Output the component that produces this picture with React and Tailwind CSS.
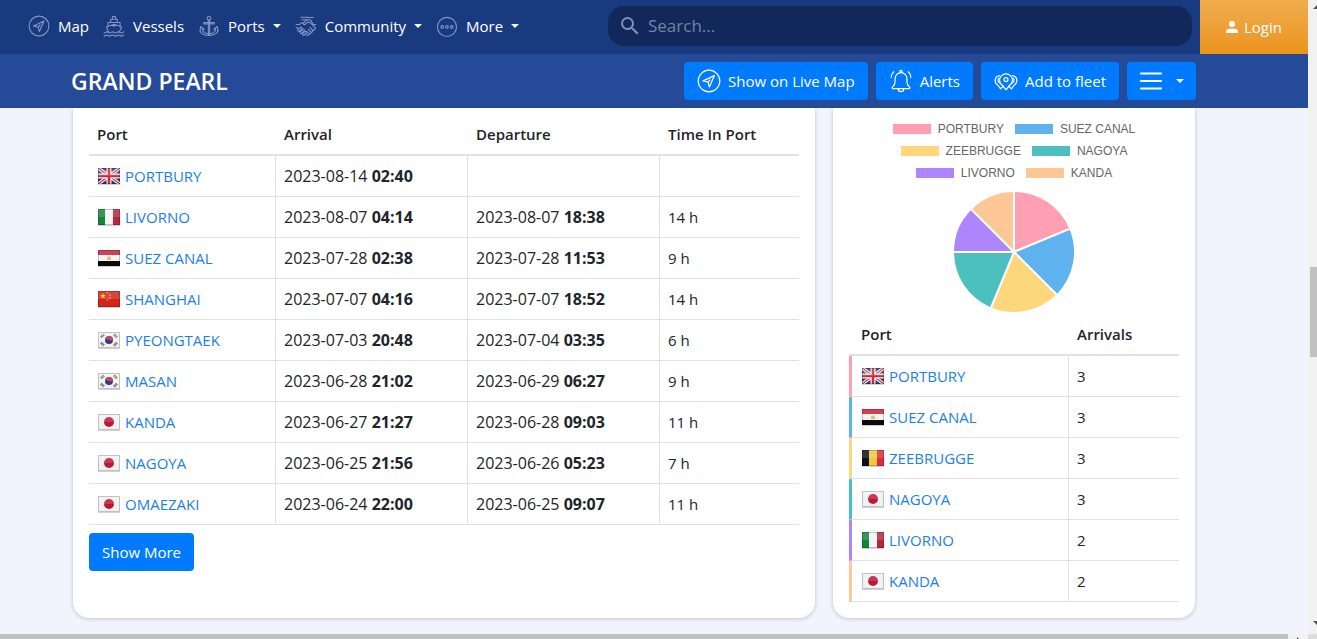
const NAV_ITEMS = [
    { label: 'Map', icon: CompassIcon },
    { label: 'Vessels', icon: ShipIcon },
    { label: 'Ports', icon: AnchorIcon, menu: true },
    { label: 'Community', icon: HandshakeIcon, menu: true },
    { label: 'More', icon: MoreIcon, menu: true },
];

const PORT_CALLS = [
    { port: 'PORTBURY', flag: 'gb', arrival: ['2023-08-14', '02:40'] },
    { port: 'LIVORNO', flag: 'it', arrival: ['2023-08-07', '04:14'], departure: ['2023-08-07', '18:38'], time: '14 h' },
    { port: 'SUEZ CANAL', flag: 'eg', arrival: ['2023-07-28', '02:38'], departure: ['2023-07-28', '11:53'], time: '9 h' },
    { port: 'SHANGHAI', flag: 'cn', arrival: ['2023-07-07', '04:16'], departure: ['2023-07-07', '18:52'], time: '14 h' },
    { port: 'PYEONGTAEK', flag: 'kr', arrival: ['2023-07-03', '20:48'], departure: ['2023-07-04', '03:35'], time: '6 h' },
    { port: 'MASAN', flag: 'kr', arrival: ['2023-06-28', '21:02'], departure: ['2023-06-29', '06:27'], time: '9 h' },
    { port: 'KANDA', flag: 'jp', arrival: ['2023-06-27', '21:27'], departure: ['2023-06-28', '09:03'], time: '11 h' },
    { port: 'NAGOYA', flag: 'jp', arrival: ['2023-06-25', '21:56'], departure: ['2023-06-26', '05:23'], time: '7 h' },
    { port: 'OMAEZAKI', flag: 'jp', arrival: ['2023-06-24', '22:00'], departure: ['2023-06-25', '09:07'], time: '11 h' },
];

const TOP_PORTS = [
    { port: 'PORTBURY', flag: 'gb', arrivals: 3, color: '#fe9fb3', swatch: 'bg-[#fe9fb3]', border: 'border-l-[#fe9fb3]' },
    { port: 'SUEZ CANAL', flag: 'eg', arrivals: 3, color: '#5eb2ed', swatch: 'bg-[#5eb2ed]', border: 'border-l-[#5eb2ed]' },
    { port: 'ZEEBRUGGE', flag: 'be', arrivals: 3, color: '#fed77d', swatch: 'bg-[#fed77d]', border: 'border-l-[#fed77d]' },
    { port: 'NAGOYA', flag: 'jp', arrivals: 3, color: '#4bc0be', swatch: 'bg-[#4bc0be]', border: 'border-l-[#4bc0be]' },
    { port: 'LIVORNO', flag: 'it', arrivals: 2, color: '#ad85fd', swatch: 'bg-[#ad85fd]', border: 'border-l-[#ad85fd]' },
    { port: 'KANDA', flag: 'jp', arrivals: 2, color: '#fdc896', swatch: 'bg-[#fdc896]', border: 'border-l-[#fdc896]' },
];

/* ICONS */
function Icon({ className = '', children }) {
    return (
        <svg viewBox="0 0 24 24" fill="none" stroke="currentColor" strokeWidth="1.2" strokeLinecap="round" strokeLinejoin="round" className={`shrink-0 ${className}`} aria-hidden="true">
            {children}
        </svg>
    );
}

function CompassIcon({ className }) {
    return (
        <Icon className={className}>
            <circle cx="12" cy="12" r="10.8" />
            <path d="M17.4 6.6 6 11.9l5 1.1 1.4 5z" />
            <path d="m11 13 2.2-2.1" />
        </Icon>
    );
}

function ShipIcon({ className }) {
    return (
        <Icon className={className}>
            <path d="M10.3 4.5V1.6h3.4v2.9M8.4 8V4.6h7.2V8M5.4 12.4V8.1h13.2v4.3" />
            <path d="M6.2 18.6 3.7 13 12 10.2l8.3 2.8-2.5 5.6M12 10.2v2.6" />
            <path d="M1.2 19.6c1.5 0 1.5-1.2 3-1.2s1.5 1.2 3.1 1.2 1.6-1.2 3.1-1.2 1.6 1.2 3.2 1.2 1.5-1.2 3.1-1.2 1.6 1.2 3.1 1.2 1.5-1.2 3-1.2" />
            <path d="M1.2 23c1.5 0 1.5-1.2 3-1.2S5.7 23 7.3 23s1.6-1.2 3.1-1.2S12 23 13.6 23s1.5-1.2 3.1-1.2S18.3 23 19.8 23s1.5-1.2 3-1.2" />
        </Icon>
    );
}

function AnchorIcon({ className }) {
    return (
        <Icon className={className}>
            <circle cx="12" cy="3.6" r="2" />
            <path d="M11.3 5.8v14.8l.7 1.7.7-1.7V5.8M6.3 8.3h11.4v1.5H6.3z" />
            <path d="M2.2 17.4 3 12.6l3.8 3-2.1.3c1 2.8 3.2 4.4 6.6 4.7M21.8 17.4l-.8-4.8-3.8 3 2.1.3c-1 2.8-3.2 4.4-6.6 4.7" />
            <path d="M2.2 17.4c1.5 3.3 5 4.9 9.8 4.9s8.3-1.6 9.8-4.9" />
        </Icon>
    );
}

function HandshakeIcon({ className }) {
    return (
        <Icon className={className}>
            <path d="M6.4 2.4h5.2c1.2 0 2 .4 3 .4H20M7.8 5.2h3.8M12.2 5.6 9.3 8.8c-.8 1.2.8 2.2 1.9 1.3l2.7-2.3 2.5.3 5.8 6" />
            <path d="M1.2 10.4h3.6l2-1.9 2.3.2M1.2 13.6l2.3 1M22.8 10.4h-3l-2.5-4.6-2.7-.8-2.4.6" />
            <path d="m3.4 15.9 2.2-2.3c1.2-1 2.6.3 1.7 1.5l-2.1 2.4c-1.2 1-2.7-.4-1.8-1.6zM5.8 18.3l2.4-2.6c1.2-1 2.6.3 1.7 1.5l-2.3 2.6c-1.2 1-2.7-.3-1.8-1.5zM8.4 20.4l2.1-2.3c1.2-1 2.5.3 1.7 1.5l-2.1 2.3c-1.1.9-2.5-.3-1.7-1.5z" />
            <path d="m12 20.9 1.5 1.2c1.4.7 2.5-.8 1.6-1.9l-2.3-2.3M15.3 20.4c1.7.7 2.8-.8 1.9-2l-2.6-2.6M17.4 18.6c1.7.4 2.6-1 1.7-2.1l-2.9-2.9M19.4 16.5c1.4.3 3-1.2 2.8-2.4" />
        </Icon>
    );
}

function MoreIcon({ className }) {
    return (
        <Icon className={className}>
            <circle cx="12" cy="13" r="10.4" />
            <circle cx="6.8" cy="13" r="1.4" />
            <circle cx="12" cy="13" r="1.4" />
            <circle cx="17.2" cy="13" r="1.4" />
        </Icon>
    );
}

function BellIcon({ className }) {
    return (
        <Icon className={className}>
            <path d="M10.9 3.6V2.4c0-1.5 2.2-1.5 2.2 0v1.2" />
            <path d="M4 19.7c-1 0-1.3-1.1-.5-1.7 1.7-1.3 2.6-3 2.6-5.6V9.5a5.9 5.9 0 0 1 11.8 0v2.9c0 2.6.9 4.3 2.6 5.6.8.6.5 1.7-.5 1.7z" />
            <path d="M9.3 19.9a2.7 2.7 0 0 0 5.4 0M4.7 2.8C3.2 4.2 2.3 6 2.2 8.3M19.3 2.8c1.5 1.4 2.4 3.2 2.5 5.5" />
        </Icon>
    );
}

function FleetIcon({ className }) {
    return (
        <Icon className={className}>
            <path d="M12 20.8c-1.1-1.6-2.2-2.8-3.5-4.2a6.4 6.4 0 1 1 7 0c-1.300 1.400-2.400 2.600-3.500 4.200z" />
            <circle cx="12" cy="10.600" r="2" />
            <path d="M5.600 6.600c-2.700.4-4.500 2.500-4.500 5 0 2.300 1.200 3.800 3 4.900l2.500 3.300 2.700-2.800M18.400 6.600c2.700.4 4.500 2.500 4.500 5 0 2.300-1.200 3.800-3 4.900l-2.500 3.300-2.700-2.800" />
            <path d="M4.900 9.200c-1.600 1.700-.9 4.300 1.300 5M19.100 9.200c1.600 1.700.9 4.300-1.300 5" />
        </Icon>
    );
}

function BarsIcon({ className }) {
    return (
        <Icon className={className}>
            <path strokeWidth="1.8" d="M1.8 4.500h20.400M1.800 12h20.400M1.800 19.500h20.400" />
        </Icon>
    );
}

function Caret() {
    return <span className="border-x-[4px] border-t-[4px] border-x-transparent border-t-current" />;
}

/* FLAGS */
function star(cx, cy, r) {
    return Array.from({ length: 10 }, (_, i) => {
        const a = (i * Math.PI) / 5 - Math.PI / 2;
        const d = i % 2 ? r * 0.4 : r;
        return `${cx + d * Math.cos(a)},${cy + d * Math.sin(a)}`;
    }).join(' ');
}

const FLAG_ART = {
    gb: (
        <>
            <path fill="#26397c" d="M0 0h22v16H0z" />
            <path stroke="#fff" strokeWidth="3.4" d="m0 0 22 16M22 0 0 16" />
            <path stroke="#cc2a3b" strokeWidth="1.2" d="m0 0 22 16M22 0 0 16" />
            <path stroke="#fff" strokeWidth="5" d="M11 0v16M0 8h22" />
            <path stroke="#cc2a3b" strokeWidth="2.6" d="M11 0v16M0 8h22" />
        </>
    ),
    it: (
        <>
            <path fill="#f4f4f4" d="M0 0h22v16H0z" />
            <path fill="#13853f" d="M0 0h7v16H0z" />
            <path fill="#b9283a" d="M15 0h7v16h-7z" />
        </>
    ),
    eg: (
        <>
            <path fill="#f2f2f2" d="M0 0h22v16H0z" />
            <path fill="#c62039" d="M0 0h22v5H0z" />
            <path fill="#0b0b0b" d="M0 11h22v5H0z" />
            <path fill="#d6c27c" d="M9 6.5h4V10H9z" />
        </>
    ),
    cn: (
        <>
            <path fill="#d42418" d="M0 0h22v16H0z" />
            <polygon fill="#fbd12c" points={star(5, 5, 3)} />
            <g fill="#e8863a">
                <circle cx="9.5" cy="2" r="0.9" />
                <circle cx="12" cy="4" r="0.9" />
                <circle cx="12" cy="7" r="0.9" />
                <circle cx="9.5" cy="9" r="0.9" />
            </g>
        </>
    ),
    kr: (
        <>
            <path fill="#f1f1f1" d="M0 0h22v16H0z" />
            <circle cx="11" cy="8" r="4" fill="#28407f" />
            <path fill="#bd2a40" d="M7.3 6.5A4 4 0 0 1 15 8c-1 1.7-3 1.6-4 0s-3-1.500-3.700-1.500z" />
            <path stroke="#5c5c5c" strokeWidth="2.6" strokeDasharray="1 0.5" d="m3 5.4 3-3M16 2.400l3 3M3 10.600l3 3M16 13.600l3-3" />
        </>
    ),
    jp: (
        <>
            <path fill="#f1f1f1" d="M0 0h22v16H0z" />
            <circle cx="11" cy="8" r="5" fill="#bd1738" />
        </>
    ),
    be: (
        <>
            <path fill="#f3c93c" d="M0 0h22v16H0z" />
            <path fill="#111" d="M0 0h7v16H0z" />
            <path fill="#e02b3c" d="M15 0h7v16h-7z" />
        </>
    ),
};

function Flag({ code }) {
    return (
        <svg viewBox="-1 -4 24 24" fill="none" className="size-6 shrink-0" aria-hidden="true">
            <path fill="#000" opacity="0.18" d="M0 1h22v16H0z" />
            <svg width="22" height="16" viewBox="0 0 22 16">{FLAG_ART[code]}</svg>
            <path fill="#fff" opacity="0.15" d="M0 0h22v8H0z" />
            <path stroke="#000" opacity="0.2" d="M.5.5h21v15H.5z" />
        </svg>
    );
}

/* CHART */
function PieChart({ data }) {
    const total = data.reduce((sum, d) => sum + d.arrivals, 0);
    let start = 0;
    return (
        <svg viewBox="-61 -61 122 122" className="size-[122px]" role="img" aria-label="Arrivals by port">
            {data.map((d) => {
                const a0 = (start / total) * 2 * Math.PI;
                start += d.arrivals;
                const a1 = (start / total) * 2 * Math.PI;
                return (
                    <path
                        key={d.port}
                        fill={d.color}
                        stroke="#fff"
                        strokeWidth="2"
                        strokeLinejoin="bevel"
                        d={`M0 0L${61 * Math.sin(a0)} ${-61 * Math.cos(a0)}A61 61 0 0 1 ${61 * Math.sin(a1)} ${-61 * Math.cos(a1)}Z`}
                    />
                );
            })}
        </svg>
    );
}

/* TABLE PARTS */
function Th({ className = '', children }) {
    return <th scope="col" className={`border-b-2 border-[#dee2e6] px-2 py-2 text-left font-semibold ${className}`}>{children}</th>;
}

function Td({ last, className = 'pl-2', children }) {
    return <td className={`h-[41px] border-b border-b-[#dee2e6] pr-2 ${last ? '' : 'border-r border-r-[#dee2e6]'} ${className}`}>{children}</td>;
}

function PortLink({ port, flag }) {
    return (
        <a href="#port" className="flex items-center gap-1 text-[#1b80e8]">
            <Flag code={flag} />
            {port}
        </a>
    );
}

function Stamp({ value }) {
    if (!value) return null;
    return (
        <span className="text-base">
            {value[0]} <b className="font-bold">{value[1]}</b>
        </span>
    );
}

function ActionButton({ icon: IconComponent, children, className = 'gap-[7px] px-[13px]' }) {
    return (
        <button type="button" className={`flex h-[38px] items-center rounded bg-[#007bff] text-white ${className}`}>
            <IconComponent className="size-6" />
            {children}
        </button>
    );
}

export default function App() {
    return (
        <div className="flex min-h-screen flex-col bg-[#f1f4fc] font-['Open_Sans','Noto_Sans',sans-serif] text-[15px] leading-6 text-[#212529]">
            <div className="flex flex-1">
                <div className="min-w-0 flex-1">
                    {/* TOP BAR */}
                    <header className="flex h-[54px] bg-[#1a3a80] text-white">
                        <nav className="flex shrink-0 basis-[608px] items-center gap-3.5 pb-0.5 pl-7">
                            {NAV_ITEMS.map(({ label, icon: IconComponent, menu }) => (
                                <a key={label} href={`#${label.toLowerCase()}`} className="flex items-center gap-2">
                                    <IconComponent className="size-[22px] text-[#8495c4]" />
                                    {label}
                                    {menu && <Caret />}
                                </a>
                            ))}
                        </nav>
                        <label className="mt-1.5 mr-2 flex h-10 flex-1 items-center gap-1.5 rounded-2xl bg-[#13285a] pl-2.5 text-[#8390b2]">
                            <svg viewBox="0 0 24 24" fill="currentColor" className="size-6" aria-hidden="true">
                                <path d="M15.5 14h-.79l-.28-.27A6.471 6.471 0 0 0 16 9.5 6.5 6.5 0 1 0 9.5 16c1.610 0 3.090-.59 4.230-1.570l.27.28v.79l5 4.990L20.490 19l-4.990-5zm-6 0C7.010 14 5 11.990 5 9.500S7.010 5 9.500 5 14 7.010 14 9.500 11.990 14 9.500 14z" />
                            </svg>
                            <input type="text" aria-label="Search" placeholder="Search..." className="min-w-0 flex-1 bg-transparent text-[17px] outline-none placeholder:text-[#7683a8]" />
                        </label>
                        <button type="button" className="flex w-[108px] items-center justify-center gap-1.5 bg-gradient-to-b from-[#f0ad4e] to-[#eb9316]">
                            <svg viewBox="0 0 12 12" fill="currentColor" className="size-3" aria-hidden="true">
                                <circle cx="6" cy="3" r="3" />
                                <path d="M0 12v-1.500C0 8.300 2.200 7.400 6 7.400s6 .9 6 3.100V12z" />
                            </svg>
                            Login
                        </button>
                    </header>

                    {/* VESSEL BAR */}
                    <div className="flex h-[54px] items-center justify-between bg-[#244a98] pr-28 pl-[71px]">
                        <h1 className="text-[23px] font-semibold text-white">GRAND PEARL</h1>
                        <div className="flex gap-2">
                            <ActionButton icon={CompassIcon}>Show on Live Map</ActionButton>
                            <ActionButton icon={BellIcon}>Alerts</ActionButton>
                            <ActionButton icon={FleetIcon}>Add to fleet</ActionButton>
                            <ActionButton icon={BarsIcon} className="gap-[13px] px-3"><Caret /></ActionButton>
                        </div>
                    </div>

                    {/* CARDS */}
                    <main className="grid grid-cols-[742fr_362fr] gap-[18px] overflow-hidden pr-[113px] pb-4 pl-[73px]">
                        <section className="rounded-b-2xl bg-white px-4 pt-1.5 shadow-[0_1px_4px_rgba(0,0,0,0.2)]">
                            <table className="w-full table-fixed border-separate border-spacing-0">
                                <thead>
                                    <tr>
                                        <Th className="w-[187px]">Port</Th>
                                        <Th className="w-[192px]">Arrival</Th>
                                        <Th className="w-[192px]">Departure</Th>
                                        <Th>Time In Port</Th>
                                    </tr>
                                </thead>
                                <tbody>
                                    {PORT_CALLS.map((call) => (
                                        <tr key={call.port}>
                                            <Td><PortLink port={call.port} flag={call.flag} /></Td>
                                            <Td><Stamp value={call.arrival} /></Td>
                                            <Td><Stamp value={call.departure} /></Td>
                                            <Td last>{call.time}</Td>
                                        </tr>
                                    ))}
                                </tbody>
                            </table>
                            <button type="button" className="mt-2 h-[38px] rounded bg-[#007bff] px-[13px] text-white">Show More</button>
                        </section>

                        <section className="flex flex-col items-center rounded-b-2xl bg-white px-4 pt-2.5 pb-4 shadow-[0_1px_4px_rgba(0,0,0,0.2)]">
                            <ul className="flex max-w-[300px] flex-wrap justify-center gap-x-[11px] font-['Liberation_Sans',Arial,sans-serif] text-xs leading-[22px] text-[#666]">
                                {TOP_PORTS.map((p) => (
                                    <li key={p.port} className="flex items-center gap-[7px]">
                                        <span className={`h-2.5 w-[38px] ${p.swatch}`} />
                                        {p.port}
                                    </li>
                                ))}
                            </ul>
                            <div className="mt-[7px]">
                                <PieChart data={TOP_PORTS} />
                            </div>
                            <table className="mt-px w-full table-fixed border-separate border-spacing-0">
                                <thead>
                                    <tr>
                                        <Th className="w-[220px] pl-3">Port</Th>
                                        <Th>Arrivals</Th>
                                    </tr>
                                </thead>
                                <tbody>
                                    {TOP_PORTS.map((p) => (
                                        <tr key={p.port}>
                                            <Td className={`border-l-[3px] pl-[9px] ${p.border}`}><PortLink port={p.port} flag={p.flag} /></Td>
                                            <Td last>{p.arrivals}</Td>
                                        </tr>
                                    ))}
                                </tbody>
                            </table>
                        </section>
                    </main>
                </div>

                {/* VERTICAL SCROLLBAR */}
                <div className="flex w-[9px] flex-col items-end overflow-hidden bg-[#f1f1f1]" aria-hidden="true">
                    <svg viewBox="0 0 4 4" className="mt-[5px] size-1 fill-[#505050]"><path d="M0 4 4 0v4z" /></svg>
                    <div className="grow-[258]" />
                    <div className="h-[90px] w-[7px] bg-[#c1c1c1]" />
                    <div className="grow-[264]" />
                    <svg viewBox="0 0 4 4" className="mb-[9px] size-1 fill-[#505050]"><path d="M0 0h4v4z" /></svg>
                </div>
            </div>

            {/* HORIZONTAL SCROLLBAR */}
            <div className="flex h-[5px] bg-[#f1f1f1]" aria-hidden="true">
                <div className="flex-1 bg-[#c1c1c1]" />
                <div className="flex w-5 items-end justify-center">
                    <svg viewBox="0 0 2 2" className="size-0.5 fill-[#505050]"><path d="M0 0l2 2H0z" /></svg>
                </div>
                <div className="w-[9px] bg-[#dcdcdc]" />
            </div>
        </div>
    );
}
